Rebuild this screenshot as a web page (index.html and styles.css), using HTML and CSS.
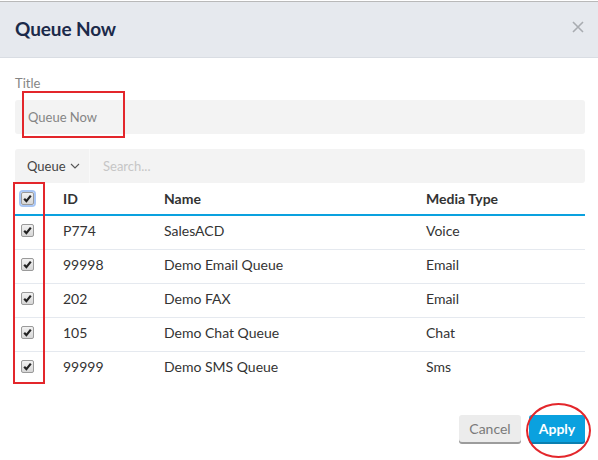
FILE: index.html
```html
<html>
  <head>
    <link rel="stylesheet" href="styles.css">
    <title>Queue Now</title>
  </head>
  <body>
    <div class="modal">
      <div class="modal-header">
        <h1>Queue Now</h1>
        <svg class="close" width="12" height="12" viewBox="0 0 12 12"><path d="M1 1l10 10M11 1L1 11" stroke="#a9acb1" stroke-width="1.6"/></svg>
      </div>
      <div class="modal-body">
        <label class="field-label">Title</label>
        <div class="title-input">
          <span>Queue Now</span>
          <div class="mark-box"></div>
        </div>
        <div class="search-bar">
          <div class="search-type">Queue
            <svg width="10" height="6" viewBox="0 0 10 6"><path d="M1 1l4 4 4-4" fill="none" stroke="#555" stroke-width="1.1"/></svg>
          </div>
          <div class="search-input">Search...</div>
        </div>
        <div class="table-wrap">
          <table>
            <thead>
              <tr>
                <th class="col-check"><span class="check focus"><svg viewBox="0 0 10 10"><path d="M2 5.2l2 2.2 4-5" fill="none" stroke="#222" stroke-width="2"/></svg></span></th>
                <th class="col-id">ID</th>
                <th class="col-name">Name</th>
                <th>Media Type</th>
              </tr>
            </thead>
            <tbody>
              <tr>
                <td class="col-check"><span class="check"><svg viewBox="0 0 10 10"><path d="M2 5.2l2 2.2 4-5" fill="none" stroke="#222" stroke-width="2"/></svg></span></td>
                <td>P774</td><td>SalesACD</td><td>Voice</td>
              </tr>
              <tr>
                <td class="col-check"><span class="check"><svg viewBox="0 0 10 10"><path d="M2 5.2l2 2.2 4-5" fill="none" stroke="#222" stroke-width="2"/></svg></span></td>
                <td>99998</td><td>Demo Email Queue</td><td>Email</td>
              </tr>
              <tr>
                <td class="col-check"><span class="check"><svg viewBox="0 0 10 10"><path d="M2 5.2l2 2.2 4-5" fill="none" stroke="#222" stroke-width="2"/></svg></span></td>
                <td>202</td><td>Demo FAX</td><td>Email</td>
              </tr>
              <tr>
                <td class="col-check"><span class="check"><svg viewBox="0 0 10 10"><path d="M2 5.2l2 2.2 4-5" fill="none" stroke="#222" stroke-width="2"/></svg></span></td>
                <td>105</td><td>Demo Chat Queue</td><td>Chat</td>
              </tr>
              <tr>
                <td class="col-check"><span class="check"><svg viewBox="0 0 10 10"><path d="M2 5.2l2 2.2 4-5" fill="none" stroke="#222" stroke-width="2"/></svg></span></td>
                <td>99999</td><td>Demo SMS Queue</td><td>Sms</td>
              </tr>
            </tbody>
          </table>
          <div class="mark-column"></div>
        </div>
      </div>
      <div class="modal-footer">
        <button class="btn btn-cancel">Cancel</button>
        <button class="btn btn-apply">Apply</button>
        <div class="mark-ellipse"></div>
      </div>
    </div>
  </body>
</html>
```
FILE: styles.css
```css
body {
  margin: 0;
  padding-top: 1px;
  background: #fff;
  font-family: Lato, "Open Sans", sans-serif;
  color: #333;
}

.modal {
  border-top: 1px solid #b9b9b9;
  width: 598px;
}

.modal-header {
  height: 55px;
  background: #e6e9ee;
  border-bottom: 1px solid #d9dde3;
  display: flex;
  align-items: center;
  justify-content: space-between;
  padding: 0 14px 0 15px;
}

.modal-header h1 {
  margin: 0 0 2px;
  font-size: 19px;
  font-weight: 700;
  color: #1b2a4a;
  letter-spacing: -0.1px;
}

.close {
  margin-top: -6px;
}

.modal-body {
  padding: 17px 13px 0 15px;
}

.field-label {
  display: block;
  font-size: 13px;
  color: #858585;
  line-height: 16px;
}

.title-input {
  position: relative;
  margin-top: 9px;
  height: 34px;
  background: #f3f3f3;
  border-radius: 3px;
  display: flex;
  align-items: center;
  padding-left: 13px;
  font-size: 13px;
  color: #858585;
}

.mark-box {
  position: absolute;
  left: 7px;
  top: -9px;
  width: 99px;
  height: 43px;
  border: 2px solid #e3262b;
}

.search-bar {
  margin-top: 15px;
  height: 34px;
  background: #f3f3f3;
  border-radius: 3px;
  display: flex;
  align-items: center;
}

.search-type {
  height: 34px;
  width: 75px;
  box-sizing: border-box;
  border-right: 1px solid #f9f9f9;
  display: flex;
  align-items: center;
  gap: 4px;
  padding-left: 12px;
  font-size: 13px;
  color: #444;
}

.search-input {
  padding-left: 13px;
  font-size: 13px;
  color: #c6c6c6;
}

.table-wrap {
  position: relative;
}

table {
  width: 570px;
  border-collapse: collapse;
  font-size: 14px;
}

th {
  text-align: left;
  font-weight: 700;
  height: 32px;
  color: #333;
  border-bottom: 2px solid #0aa1df;
  padding: 0;
}

td {
  height: 34px;
  padding: 0 0 4px;
  border-bottom: 1px solid #e5e9ef;
  color: #333;
}

tbody tr:last-child td {
  border-bottom: none;
}

.col-check {
  width: 48px;
  padding-left: 6px;
  box-sizing: border-box;
}

.col-id {
  width: 101px;
}

.col-name {
  width: 262px;
}

.check {
  display: block;
  width: 11px;
  height: 11px;
  border: 1px solid #9a9a9a;
  border-radius: 2px;
  background: linear-gradient(#f2f2f2, #d6d6d6);
}

.check svg {
  display: block;
  width: 11px;
  height: 11px;
}

.check.focus {
  box-shadow: 0 0 0 2px #a9c6f5;
}

.mark-column {
  position: absolute;
  left: -2px;
  top: -1px;
  width: 28px;
  height: 198px;
  border: 2px solid #e3262b;
}

.modal-footer {
  position: relative;
  display: flex;
  justify-content: flex-end;
  gap: 8px;
  padding: 30px 13px 0 0;
}

.btn {
  font-family: Lato, "Open Sans", sans-serif;
  font-size: 14px;
  height: 27px;
  border: none;
  border-radius: 3px;
  padding: 0;
}

.btn-cancel {
  width: 62px;
  background: #ececec;
  color: #7a7a7a;
  box-shadow: 0 2px 0 #9c9c9c;
}

.btn-apply {
  width: 56px;
  background: #0aa1df;
  color: #fff;
  font-weight: 700;
  box-shadow: 0 2px 0 #0b7fb0;
}

.mark-ellipse {
  position: absolute;
  right: 7px;
  top: 18px;
  width: 61px;
  height: 51px;
  border: 2px solid #e3262b;
  border-radius: 50%;
}
```
